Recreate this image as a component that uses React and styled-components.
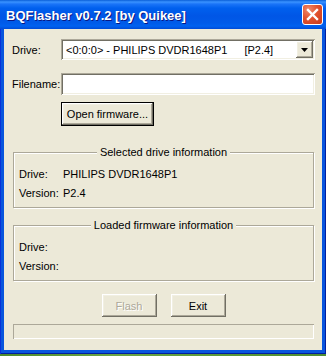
import styled, { createGlobalStyle, css } from "styled-components";

const GlobalStyle = createGlobalStyle`
  html, body { margin: 0; padding: 0; }
  body {
    width: 326px;
    height: 356px;
    overflow: hidden;
    background: linear-gradient(90deg, #4d8a2e 0%, #6ba545 35%, #5a9838 70%, #4f8d33 100%);
    font-family: "Liberation Sans", Arial, sans-serif;
  }
`;

const sunken = css`
  box-shadow: inset 1px 1px 0 #aca899, inset -1px -1px 0 #ffffff,
    inset 2px 2px 0 #716f64, inset -2px -2px 0 #f1efe2;
`;

const raised = css`
  box-shadow: inset -1px -1px 0 #716f64, inset 1px 1px 0 #ffffff,
    inset -2px -2px 0 #aca899, inset 2px 2px 0 #f1efe2;
`;

const Window = styled.div`
  width: 326px;
  height: 354px;
  display: flex;
  flex-direction: column;
  background: #0855dd;
  box-shadow: inset 1px 0 0 #0831d9, inset -1px 0 0 #001ea0,
    inset 0 -1px 0 #001ea0;
`;

const TitleBar = styled.div`
  height: 29px;
  flex: none;
  display: flex;
  align-items: center;
  justify-content: space-between;
  padding: 0 3px 0 6px;
  background: linear-gradient(
    180deg,
    #0a5fd8 0%,
    #3a93ff 7%,
    #1a74f8 14%,
    #0060ee 28%,
    #0056e6 55%,
    #005be9 80%,
    #0062f0 90%,
    #004bd6 100%
  );
`;

const Title = styled.span`
  color: #ffffff;
  font-size: 13px;
  font-weight: bold;
  text-shadow: 1px 1px 0 #0a1883;
  margin-top: 1px;
`;

const CloseButton = styled.div`
  width: 21px;
  height: 21px;
  box-sizing: border-box;
  border: 1px solid #ffffff;
  border-radius: 3px;
  background: radial-gradient(circle at 30% 25%, #f08a6c 0%, #e2532f 45%, #c8391b 100%);
  display: flex;
  align-items: center;
  justify-content: center;
`;

const Client = styled.div`
  flex: 1;
  margin: 0 4px 4px;
  padding: 10px 7px 0 8px;
  background: #ece9d8;
  display: flex;
  flex-direction: column;
  font-size: 11px;
  color: #000000;
`;

const FieldRow = styled.div`
  display: flex;
  align-items: center;
  height: ${(p) => p.$h}px;
  margin-top: ${(p) => p.$top || 0}px;
`;

const FieldLabel = styled.span`
  width: 49px;
  flex: none;
`;

const Combo = styled.div`
  flex: 1;
  align-self: stretch;
  display: flex;
  padding: 2px;
  background: #ffffff;
  ${sunken};
`;

const ComboText = styled.span`
  flex: 1;
  display: flex;
  align-items: center;
  padding-left: 3px;
  white-space: nowrap;
`;

const Tag = styled.span`
  margin-left: 17px;
`;

const DropButton = styled.div`
  width: 17px;
  flex: none;
  display: flex;
  align-items: center;
  justify-content: center;
  background: #ece9d8;
  ${raised};
`;

const TextInput = styled.div`
  flex: 1;
  align-self: stretch;
  background: #ffffff;
  ${sunken};
`;

const Button = styled.div`
  width: ${(p) => p.$w}px;
  height: ${(p) => p.$h || 23}px;
  display: flex;
  align-items: center;
  justify-content: center;
  background: #ece9d8;
  color: ${(p) => (p.$disabled ? "#aca899" : "#000000")};
  text-shadow: ${(p) => (p.$disabled ? "1px 1px 0 #ffffff" : "none")};
  ${(p) =>
    p.$default
      ? css`
          box-shadow: inset 0 0 0 1px #000000, inset -2px -2px 0 #716f64,
            inset 2px 2px 0 #ffffff, inset -3px -3px 0 #aca899,
            inset 3px 3px 0 #f1efe2;
        `
      : raised};
`;

const OpenRow = styled.div`
  display: flex;
  margin: 7px 0 0 49px;
`;

const Group = styled.fieldset`
  margin: ${(p) => p.$top}px 1px 0;
  padding: 5px 5px 5px;
  min-width: 0;
  border: 1px solid #aca899;
  box-shadow: 1px 1px 0 #ffffff, inset 1px 1px 0 #ffffff;
`;

const Legend = styled.legend`
  margin: 0 auto;
  padding: 0 3px;
  line-height: 13px;
  background: #ece9d8;
`;

const InfoRow = styled.div`
  display: flex;
  align-items: center;
  height: 19px;
`;

const InfoLabel = styled.span`
  width: 44px;
  flex: none;
`;

const ButtonRow = styled.div`
  display: flex;
  justify-content: center;
  gap: 14px;
  margin-top: 13px;
`;

const Progress = styled.div`
  margin: 7px 1px 0;
  height: 15px;
  box-shadow: inset 1px 1px 0 #aca899, inset -1px -1px 0 #ffffff;
`;

const InfoGroup = ({ title, top, drive, version }) => (
  <Group $top={top}>
    <Legend>{title}</Legend>
    <InfoRow>
      <InfoLabel>Drive:</InfoLabel>
      <span>{drive}</span>
    </InfoRow>
    <InfoRow>
      <InfoLabel>Version:</InfoLabel>
      <span>{version}</span>
    </InfoRow>
  </Group>
);

export default function App() {
  return (
    <>
      <GlobalStyle />
      <Window>
        <TitleBar>
          <Title>BQFlasher v0.7.2 [by Quikee]</Title>
          <CloseButton>
            <svg width="13" height="13" viewBox="0 0 13 13">
              <path d="M2 2 L11 11 M11 2 L2 11" stroke="#ffffff" strokeWidth="2.4" strokeLinecap="square" />
            </svg>
          </CloseButton>
        </TitleBar>
        <Client>
          <FieldRow $h={21}>
            <FieldLabel>Drive:</FieldLabel>
            <Combo>
              <ComboText>
                {"<0:0:0> - PHILIPS DVDR1648P1"}
                <Tag>[P2.4]</Tag>
              </ComboText>
              <DropButton>
                <svg width="7" height="4" viewBox="0 0 7 4">
                  <path d="M0 0 H7 L3.5 4 Z" fill="#000000" />
                </svg>
              </DropButton>
            </Combo>
          </FieldRow>
          <FieldRow $h={22} $top={13}>
            <FieldLabel>Filename:</FieldLabel>
            <TextInput />
          </FieldRow>
          <OpenRow>
            <Button $w={93} $h={24} $default>
              Open firmware...
            </Button>
          </OpenRow>
          <InfoGroup
            title="Selected drive information"
            top={20}
            drive="PHILIPS DVDR1648P1"
            version="P2.4"
          />
          <InfoGroup title="Loaded firmware information" top={11} drive="" version="" />
          <ButtonRow>
            <Button $w={55} $disabled>
              Flash
            </Button>
            <Button $w={55}>Exit</Button>
          </ButtonRow>
          <Progress />
        </Client>
      </Window>
    </>
  );
}
